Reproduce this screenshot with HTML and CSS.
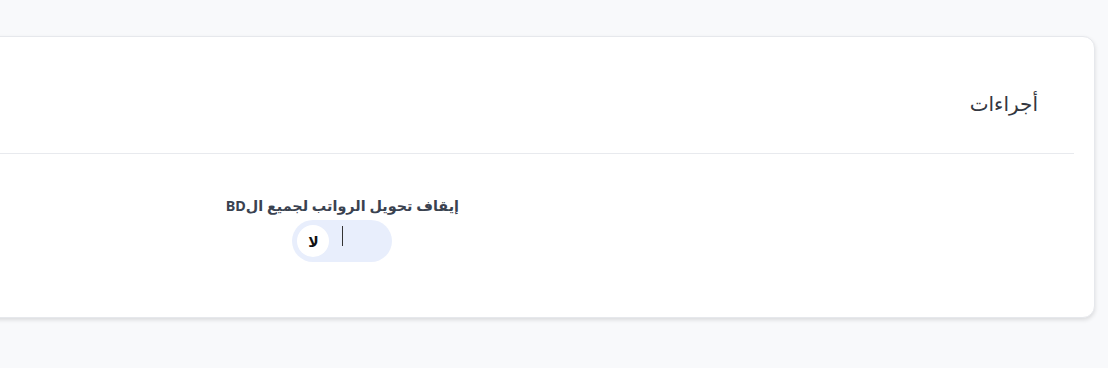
FILE: index.html
```html
<!DOCTYPE html>
<html lang="ar" dir="rtl">
<head>
<meta charset="utf-8">
<link rel="stylesheet" href="styles.css">
</head>
<body>
<div class="page">
  <div class="card">
    <div class="card-header">
      <h3 class="card-title">أجراءات</h3>
    </div>
    <div class="divider"></div>
    <div class="card-body">
      <div class="field">
        <label class="field-label">إيقاف تحويل الرواتب لجميع الBD</label>
        <div class="toggle">
          <span class="knob">لا</span>
          <span class="caret"></span>
        </div>
      </div>
    </div>
  </div>
</div>
</body>
</html>
```
FILE: styles.css
```css
html, body {
  margin: 0;
  padding: 0;
  height: 100%;
  overflow: hidden;
  background: #f8f9fb;
  font-family: "Noto Sans", "DejaVu Sans", sans-serif;
}
.page {
  padding: 36px 13px 0 0;
}
.card {
  margin-left: -40px;
  height: 280px;
  background: #ffffff;
  border: 1px solid #e6e8ec;
  border-radius: 12px;
  box-shadow: 0 2px 4px rgba(0, 0, 0, 0.12);
}
.card-header {
  height: 116px;
  padding: 0 56px 0 0;
  display: flex;
  align-items: center;
}
.card-title {
  margin: 16px 0 0 0;
  font-size: 20px;
  font-weight: 400;
  color: #333740;
}
.divider {
  height: 1px;
  background: #e8eaee;
  margin-right: 20px;
}
.card-body {
  padding: 40px 635px 0 0;
}
.field {
  display: inline-flex;
  flex-direction: column;
  align-items: center;
  gap: 4px;
}
.field-label {
  font-size: 14.4px;
  font-weight: 700;
  color: #3a4250;
  line-height: 20px;
}
.toggle {
  width: 100px;
  height: 42px;
  border-radius: 21px;
  background: #e8eefc;
  display: flex;
  flex-direction: row-reverse;
  align-items: center;
  padding: 0 5px;
  box-sizing: border-box;
}
.knob {
  width: 32px;
  height: 32px;
  border-radius: 50%;
  background: #ffffff;
  display: flex;
  align-items: center;
  justify-content: center;
  font-size: 14px;
  font-weight: 700;
  color: #111111;
}
.caret {
  width: 1px;
  height: 20px;
  background: #333333;
  margin-left: 13px;
  margin-top: -10px;
}
```
